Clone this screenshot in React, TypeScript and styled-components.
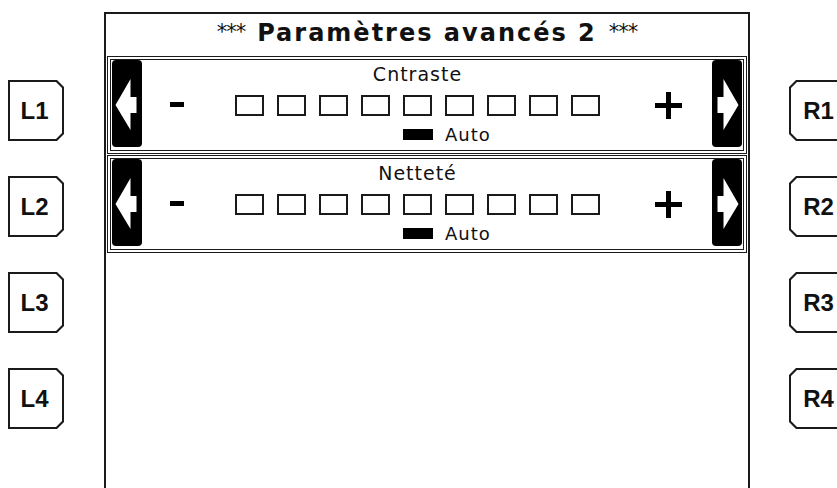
import React from "react";
import styled, { createGlobalStyle } from "styled-components";

const INK = "#1a1a1a";

const GlobalStyle = createGlobalStyle`
  html, body {
    margin: 0;
    padding: 0;
    background: #ffffff;
  }
  body {
    width: 837px;
    height: 488px;
    overflow: hidden;
    font-family: "DejaVu Sans", Verdana, sans-serif;
    color: #111111;
  }
`;

type Side = "left" | "right";

const chamferRight = (c: number) =>
  `polygon(0 0, calc(100% - ${c}px) 0, 100% ${c}px, 100% calc(100% - ${c}px), calc(100% - ${c}px) 100%, 0 100%)`;
const chamferLeft = (c: number) =>
  `polygon(${c}px 0, 100% 0, 100% 100%, ${c}px 100%, 0 calc(100% - ${c}px), 0 ${c}px)`;

const Screen = styled.div`
  display: flex;
  align-items: flex-start;
  width: 837px;
  height: 488px;
  overflow: hidden;
`;

const SideColumn = styled.div<{ $side: Side }>`
  flex: 0 0 auto;
  box-sizing: border-box;
  display: flex;
  flex-direction: column;
  gap: 35px;
  padding-top: 80px;
  width: ${(p) => (p.$side === "left" ? "104px" : "87px")};
  padding-left: ${(p) => (p.$side === "left" ? "8px" : "39px")};
`;

const SoftKey = styled.div<{ $side: Side }>`
  flex: 0 0 auto;
  box-sizing: border-box;
  width: 56px;
  height: 61px;
  padding: 2px;
  background: ${INK};
  clip-path: ${(p) => (p.$side === "left" ? chamferRight(7) : chamferLeft(7))};
`;

const KeyFace = styled.div<{ $side: Side }>`
  box-sizing: border-box;
  width: 100%;
  height: 100%;
  background: #ffffff;
  display: flex;
  align-items: center;
  justify-content: center;
  clip-path: ${(p) => (p.$side === "left" ? chamferRight(6) : chamferLeft(6))};
  font-family: "Liberation Sans", Arial, sans-serif;
  font-weight: 700;
  font-size: 24px;
  color: #111111;
  padding-right: ${(p) => (p.$side === "left" ? "3px" : "0")};
  padding-left: ${(p) => (p.$side === "right" ? "3px" : "0")};
`;

const Panel = styled.section`
  flex: 0 0 646px;
  width: 646px;
  height: 490px;
  margin-top: 12px;
  box-sizing: border-box;
  border: 2px solid ${INK};
  border-bottom: none;
  padding: 0 1px;
  display: flex;
  flex-direction: column;
`;

const Title = styled.h1`
  margin: 0;
  height: 42px;
  box-sizing: border-box;
  padding-bottom: 4px;
  display: flex;
  align-items: center;
  justify-content: center;
  gap: 12px;
  font-size: 24px;
  font-weight: 700;
  letter-spacing: 2px;
  color: #111111;
`;

const Stars = styled.span`
  font-size: 21px;
  font-weight: 400;
  letter-spacing: -1px;
  margin-top: -2px;
`;

const SettingBox = styled.div`
  display: flex;
  align-items: stretch;
  height: 98px;
  box-sizing: border-box;
  border: 4px double ${INK};
  padding: 0 1px 3px 1px;
  & + & {
    margin-top: 1px;
  }
`;

const Pill = styled.div`
  flex: 0 0 30px;
  width: 30px;
  height: 87px;
  background: #000000;
  border-radius: 4px;
  display: flex;
`;

const Controls = styled.div`
  flex: 1 1 auto;
  display: flex;
  align-items: flex-start;
`;

const Minus = styled.div`
  flex: 0 0 14px;
  width: 14px;
  height: 5px;
  margin: 42px 0 0 28px;
  background: #000000;
`;

const PlusIcon = styled.svg`
  flex: 0 0 27px;
  margin: 32px 0 0 55px;
`;

const Scale = styled.div`
  display: flex;
  flex-direction: column;
  margin-left: 51px;
  width: 365px;
`;

const Label = styled.div`
  padding-top: 3px;
  height: 22px;
  line-height: 22px;
  text-align: center;
  font-size: 19px;
  letter-spacing: 1px;
  color: #111111;
`;

const Cells = styled.div`
  display: flex;
  gap: 13px;
  margin-top: 10px;
`;

const Cell = styled.div`
  width: 29px;
  height: 21px;
  box-sizing: border-box;
  border: 2px solid ${INK};
`;

const AutoRow = styled.div`
  display: flex;
  align-items: center;
  gap: 12px;
  margin-top: 11px;
  padding-left: 168px;
  height: 15px;
`;

const AutoBar = styled.div`
  width: 30px;
  height: 11px;
  background: #000000;
`;

const AutoText = styled.span`
  font-size: 18px;
  line-height: 15px;
  letter-spacing: 1px;
  color: #111111;
`;

const Arrow = ({ dir }: { dir: "left" | "right" }) => {
  const pts =
    dir === "left"
      ? "3.5,45 18.5,19 18.5,37 24.5,37 24.5,53 18.5,53 18.5,70"
      : "26.5,45 11.5,19 11.5,37 5.5,37 5.5,53 11.5,53 11.5,70";
  return (
    <svg width="30" height="87" viewBox="0 0 30 87">
      <polygon points={pts} fill="#ffffff" />
    </svg>
  );
};

const Setting = ({ label }: { label: string }) => (
  <SettingBox>
    <Pill>
      <Arrow dir="left" />
    </Pill>
    <Controls>
      <Minus />
      <Scale>
        <Label>{label}</Label>
        <Cells>
          {Array.from({ length: 9 }).map((_, i) => (
            <Cell key={i} />
          ))}
        </Cells>
        <AutoRow>
          <AutoBar />
          <AutoText>Auto</AutoText>
        </AutoRow>
      </Scale>
      <PlusIcon width="27" height="27" viewBox="0 0 27 27">
        <rect x="0" y="11" width="27" height="5" fill="#000" />
        <rect x="11" y="0" width="5" height="27" fill="#000" />
      </PlusIcon>
    </Controls>
    <Pill>
      <Arrow dir="right" />
    </Pill>
  </SettingBox>
);

export default function App() {
  return (
    <>
      <GlobalStyle />
      <Screen>
        <SideColumn $side="left">
          {["L1", "L2", "L3", "L4"].map((k) => (
            <SoftKey key={k} $side="left">
              <KeyFace $side="left">{k}</KeyFace>
            </SoftKey>
          ))}
        </SideColumn>
        <Panel>
          <Title>
            <Stars>***</Stars>
            <span>Paramètres avancés 2</span>
            <Stars>***</Stars>
          </Title>
          <Setting label="Cntraste" />
          <Setting label="Netteté" />
        </Panel>
        <SideColumn $side="right">
          {["R1", "R2", "R3", "R4"].map((k) => (
            <SoftKey key={k} $side="right">
              <KeyFace $side="right">{k}</KeyFace>
            </SoftKey>
          ))}
        </SideColumn>
      </Screen>
    </>
  );
}
